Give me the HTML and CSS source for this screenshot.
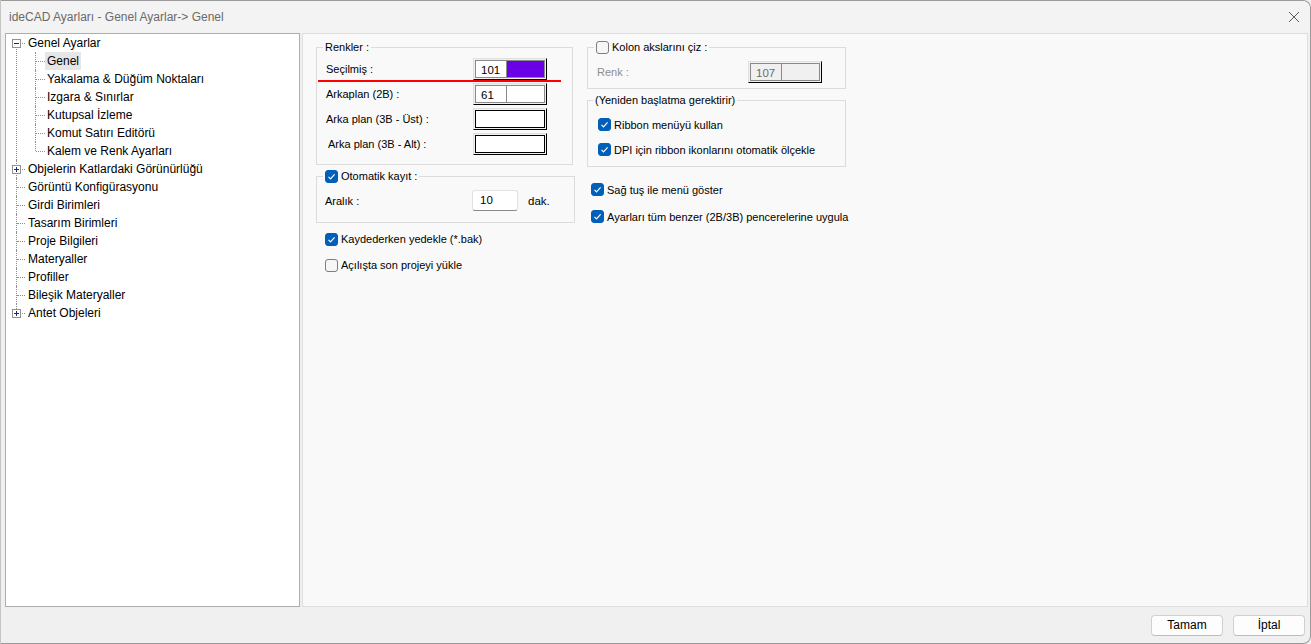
FILE: index.html
```html
<!DOCTYPE html>
<html>
  <head>
    <title>ideCAD Ayarları - Genel Ayarlar-> Genel</title>
    <link rel="stylesheet" href="styles.css">
  </head>
  <body>
    <div class="window">
      <div class="titlebar">
        <span class="title">ideCAD Ayarları - Genel Ayarlar-&gt; Genel</span>
        <svg class="close" width="12" height="12" viewBox="0 0 12 12">
          <path d="M1 1 L11 11 M11 1 L1 11" stroke="#5c5c5c" stroke-width="1" fill="none"/>
        </svg>
      </div>

      <div class="main">
        <div class="tree-panel">
          <ul class="tree">
            <li>
              <svg class="box" width="9" height="9" viewBox="0 0 9 9"><rect x="0.5" y="0.5" width="8" height="8" fill="#fff" stroke="#919191"/><path d="M2 4.5 H7" stroke="#1c2a6b"/></svg>
              <span class="label">Genel Ayarlar</span>
              <ul>
                <li><span class="label selected">Genel</span></li>
                <li><span class="label">Yakalama &amp; Düğüm Noktaları</span></li>
                <li><span class="label">Izgara &amp; Sınırlar</span></li>
                <li><span class="label">Kutupsal İzleme</span></li>
                <li><span class="label">Komut Satırı Editörü</span></li>
                <li><span class="label">Kalem ve Renk Ayarları</span></li>
              </ul>
            </li>
            <li>
              <svg class="box" width="9" height="9" viewBox="0 0 9 9"><rect x="0.5" y="0.5" width="8" height="8" fill="#fff" stroke="#919191"/><path d="M2 4.5 H7 M4.5 2 V7" stroke="#1c2a6b"/></svg>
              <span class="label">Objelerin Katlardaki Görünürlüğü</span>
            </li>
            <li><span class="label">Görüntü Konfigürasyonu</span></li>
            <li><span class="label">Girdi Birimleri</span></li>
            <li><span class="label">Tasarım Birimleri</span></li>
            <li><span class="label">Proje Bilgileri</span></li>
            <li><span class="label">Materyaller</span></li>
            <li><span class="label">Profiller</span></li>
            <li><span class="label">Bileşik Materyaller</span></li>
            <li>
              <svg class="box" width="9" height="9" viewBox="0 0 9 9"><rect x="0.5" y="0.5" width="8" height="8" fill="#fff" stroke="#919191"/><path d="M2 4.5 H7 M4.5 2 V7" stroke="#1c2a6b"/></svg>
              <span class="label">Antet Objeleri</span>
            </li>
          </ul>
        </div>

        <div class="settings">
          <div class="col col-left">
            <fieldset class="group colors">
              <legend>Renkler :</legend>
              <div class="mark"></div>
              <div class="row">
                <span class="row-label">Seçilmiş :</span>
                <div class="swatch"><span class="num">101</span><span class="fill purple"></span></div>
              </div>
              <div class="row">
                <span class="row-label">Arkaplan (2B) :</span>
                <div class="swatch"><span class="num">61</span><span class="fill"></span></div>
              </div>
              <div class="row">
                <span class="row-label">Arka plan (3B - Üst) :</span>
                <div class="swatch empty"><span class="fill"></span></div>
              </div>
              <div class="row">
                <span class="row-label shifted">Arka plan (3B - Alt) :</span>
                <div class="swatch empty"><span class="fill"></span></div>
              </div>
            </fieldset>

            <fieldset class="group autosave">
              <legend class="check-legend"><span class="cb checked"></span>Otomatik kayıt :</legend>
              <div class="row">
                <span class="row-label">Aralık :</span>
                <span class="input">10</span>
                <span class="unit">dak.</span>
              </div>
            </fieldset>

            <div class="checks left-checks">
              <div class="check"><span class="cb checked"></span>Kaydederken yedekle (*.bak)</div>
              <div class="check"><span class="cb"></span>Açılışta son projeyi yükle</div>
            </div>
          </div>

          <div class="col col-right">
            <fieldset class="group axis">
              <legend class="check-legend"><span class="cb"></span>Kolon akslarını çiz :</legend>
              <div class="row">
                <span class="row-label disabled">Renk :</span>
                <div class="swatch off"><span class="num">107</span><span class="fill"></span></div>
              </div>
            </fieldset>

            <fieldset class="group restart">
              <legend>(Yeniden başlatma gerektirir)</legend>
              <div class="check"><span class="cb checked"></span>Ribbon menüyü kullan</div>
              <div class="check"><span class="cb checked"></span>DPI için ribbon ikonlarını otomatik ölçekle</div>
            </fieldset>

            <div class="checks right-checks">
              <div class="check"><span class="cb checked"></span>Sağ tuş ile menü göster</div>
              <div class="check"><span class="cb checked"></span>Ayarları tüm benzer (2B/3B) pencerelerine uygula</div>
            </div>
          </div>
        </div>
      </div>

      <div class="footer">
        <button class="btn">Tamam</button>
        <button class="btn">İptal</button>
      </div>
    </div>
  </body>
</html>
```

FILE: styles.css
```css
body {
  margin: 0;
  width: 1311px;
  height: 644px;
  overflow: hidden;
  background: #f0f0f0;
  font-family: "Liberation Sans", Arial, sans-serif;
  color: #000;
}
.window {
  box-sizing: border-box;
  height: 644px;
  border: 1px solid #9a9a9a;
  border-left-color: #c4c4c4;
  border-radius: 0 8px 8px 0;
  background: #f0f0f0;
  display: flex;
  flex-direction: column;
}
.titlebar {
  height: 32px;
  display: flex;
  align-items: center;
  justify-content: space-between;
  padding: 0 10px 0 8px;
  background: #f3f3f3;
  border-radius: 0 8px 0 0;
}
.title {
  font-size: 12px;
  color: #6a6a6a;
}
.main {
  height: 574px;
  display: flex;
  gap: 2px;
  padding: 0 2px 0 4px;
}
.tree-panel {
  box-sizing: border-box;
  width: 295px;
  height: 100%;
  background: #fff;
  border: 1px solid #adadad;
}
.tree, .tree ul {
  list-style: none;
  margin: 0;
  padding: 0;
}
.tree li {
  position: relative;
  padding-left: 20px;
  font-size: 12px;
  line-height: 18px;
}
.tree > li::before {
  content: '';
  position: absolute;
  left: 10px;
  top: 0;
  bottom: 0;
  border-left: 1px dotted #8f8f8f;
}
.tree > li:first-child::before {
  top: 9px;
}
.tree > li:last-child::before {
  bottom: auto;
  height: 9px;
}
.tree > li::after {
  content: '';
  position: absolute;
  left: 11px;
  top: 9px;
  width: 8px;
  border-top: 1px dotted #8f8f8f;
}
.tree ul li {
  padding-left: 19px;
}
.tree ul li::before {
  content: '';
  position: absolute;
  left: 9px;
  top: 0;
  bottom: 0;
  border-left: 1px dotted #8f8f8f;
}
.tree ul li:last-child::before {
  bottom: auto;
  height: 9px;
}
.tree ul li::after {
  content: '';
  position: absolute;
  left: 10px;
  top: 9px;
  width: 9px;
  border-top: 1px dotted #8f8f8f;
}
.box {
  position: absolute;
  left: 6px;
  top: 5px;
  z-index: 1;
}
.label {
  display: inline-block;
  padding: 0 2px;
}
.label.selected {
  background: #e6e6e6;
}
.settings {
  box-sizing: border-box;
  flex: 1;
  height: 100%;
  background: #f9f9f9;
  border: 1px solid #dedede;
  display: flex;
  gap: 12px;
  padding: 6px 0 0 13px;
  font-size: 11px;
  white-space: nowrap;
}
.col {
  display: flex;
  flex-direction: column;
}
.col-left {
  width: 259px;
}
.col-right {
  width: 259px;
}
.group {
  position: relative;
  margin: 0;
  border: 1px solid #dcdcdc;
  padding: 0 8px;
  min-width: 0;
}
.group legend {
  padding: 0 2px;
  margin-left: -2px;
  line-height: 14px;
  height: 14px;
}
.check-legend {
  display: flex;
  align-items: center;
  gap: 3px;
}
.row {
  display: flex;
  align-items: center;
}
.row-label {
  width: 147px;
  flex-shrink: 0;
  padding-left: 1px;
}
.row-label.shifted {
  padding-left: 3px;
  width: 145px;
}
.row-label.disabled {
  color: #8d8d8d;
  width: 151px;
}
.colors {
  width: 257px;
  box-sizing: border-box;
  padding-top: 2px;
  padding-bottom: 8px;
}
.colors .row {
  height: 25px;
}
.mark {
  position: absolute;
  left: 1px;
  top: 26px;
  width: 243px;
  height: 2px;
  background: #f00;
}
.swatch {
  box-sizing: border-box;
  display: flex;
  width: 74px;
  height: 22px;
  padding: 1px;
  border: 1px solid;
  border-color: #e0e0e0 #000 #000 #e0e0e0;
  background: #f0f0f0;
}
.swatch .num {
  box-sizing: border-box;
  width: 31px;
  background: #fff;
  border: 1px solid #8a8a8a;
  border-right: none;
  padding-left: 5px;
  line-height: 18px;
  font-size: 11.5px;
}
.swatch .fill {
  flex: 1;
  background: #fff;
  border: 1px solid #8a8a8a;
}
.swatch .fill.purple {
  background: #6a00e6;
}
.swatch.empty .fill {
  border-color: #000;
}
.swatch.off .num {
  background: #f0f0f0;
  color: #6d6d6d;
}
.swatch.off .fill {
  background: #f0f0f0;
}
.autosave {
  margin-top: 4px;
  padding-top: 7px;
  padding-bottom: 11px;
}
.autosave .row {
  height: 21px;
}
.autosave .row-label {
  padding-left: 0;
}
.input {
  box-sizing: border-box;
  width: 46px;
  height: 21px;
  line-height: 19px;
  padding-left: 7px;
  background: #fff;
  border: 1px solid #e2e2e2;
  border-bottom-color: #8a8a8a;
  border-radius: 3px;
  font-size: 11.5px;
}
.unit {
  margin-left: 10px;
  font-size: 11.5px;
}
.cb {
  box-sizing: border-box;
  display: inline-block;
  width: 13px;
  height: 13px;
  border: 1px solid #7e7e7e;
  border-radius: 3px;
  background: #f6f6f6;
  flex-shrink: 0;
}
.cb.checked {
  border-color: #005fb8;
  background: #005fb8 url("data:image/svg+xml;utf8,<svg xmlns='http://www.w3.org/2000/svg' width='11' height='11' viewBox='0 0 11 11'><path d='M2.5 5.8 L4.5 7.8 L8.6 3.4' stroke='white' stroke-width='1.2' fill='none'/></svg>") center / 11px 11px no-repeat;
}
.check {
  display: flex;
  align-items: center;
  gap: 3px;
}
.left-checks {
  margin-top: 3px;
  padding-left: 9px;
}
.left-checks .check {
  height: 26px;
}
.axis {
  padding-top: 7px;
  padding-bottom: 6px;
}
.axis .row {
  height: 21px;
}
.restart {
  margin-top: 4px;
  padding: 5px 10px 4px;
}
.restart legend {
  margin-left: -5px;
}
.restart .check {
  height: 25px;
}
.right-checks {
  margin-top: 9px;
  padding-left: 4px;
}
.right-checks .check {
  height: 27px;
}
.footer {
  flex: 1;
  display: flex;
  align-items: center;
  justify-content: flex-end;
  gap: 10px;
  padding-right: 5px;
}
.btn {
  width: 72px;
  height: 21px;
  padding: 0;
  background: #fdfdfd;
  border: 1px solid #d0d0d0;
  border-bottom-color: #bcbcbc;
  border-radius: 4px;
  font-family: "Liberation Sans", Arial, sans-serif;
  font-size: 12px;
  color: #000;
}
```
